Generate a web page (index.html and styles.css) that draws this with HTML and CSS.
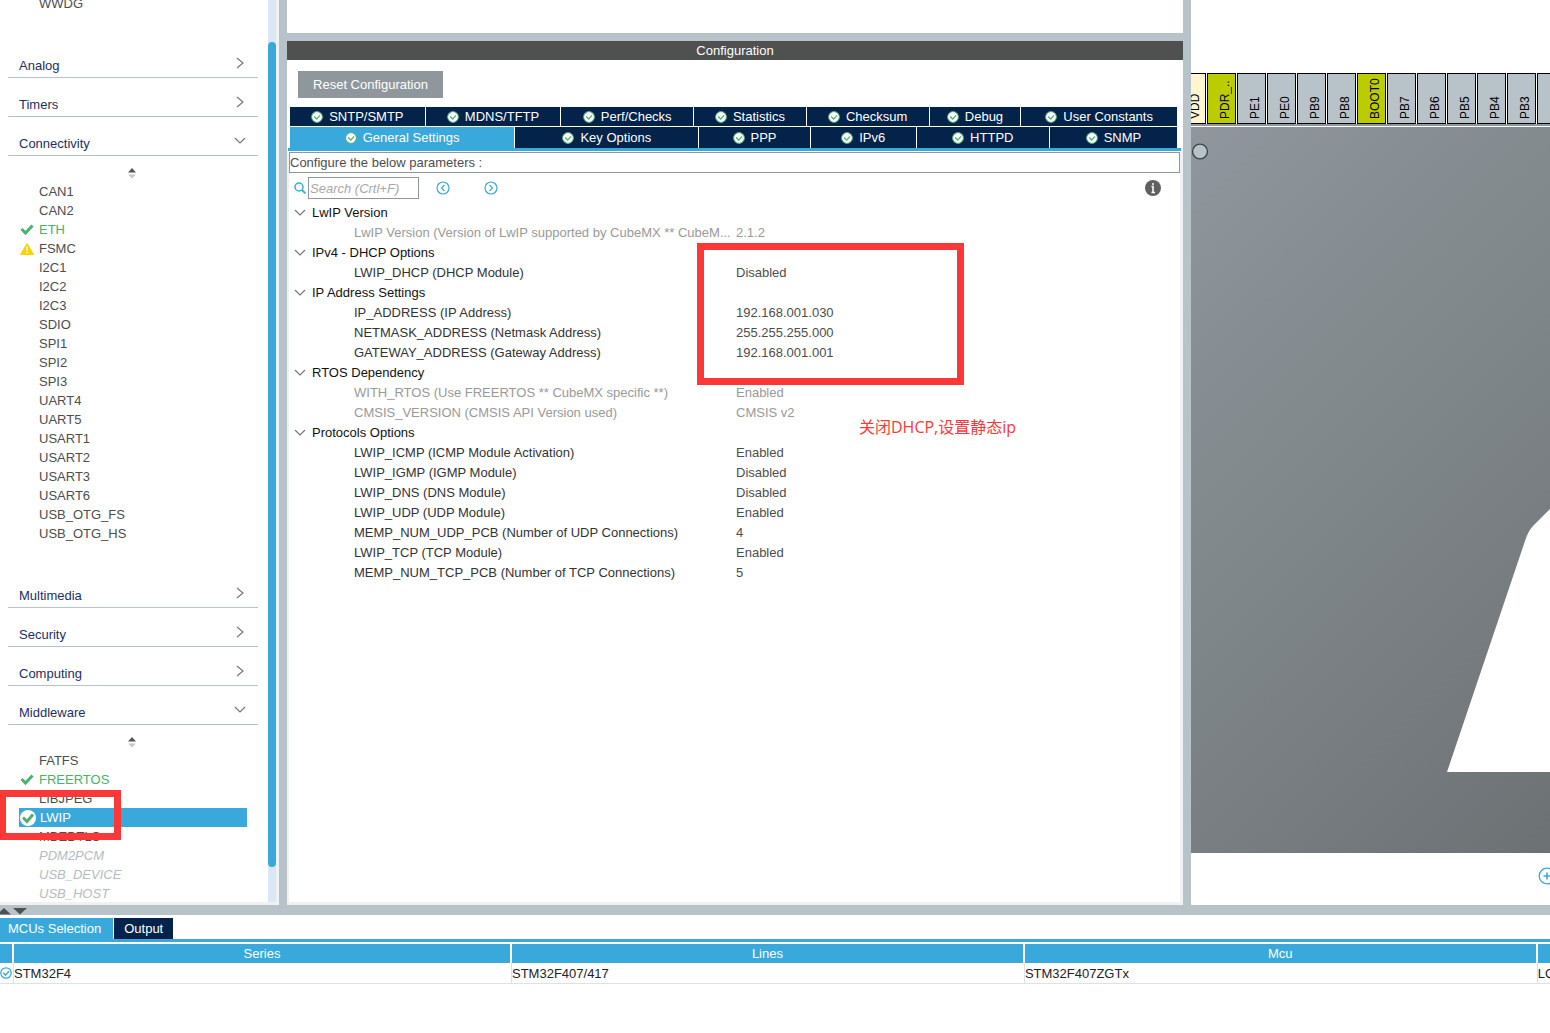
FILE: index.html
```html
<!DOCTYPE html>
<html lang="en">
<head>
<meta charset="utf-8">
<title>STM32CubeMX - LWIP Configuration</title>
<meta name="viewport" content="width=device-width, initial-scale=1">
<link rel="stylesheet" href="styles.css">
</head>
<body>
<svg width="0" height="0" class="defs" aria-hidden="true">
  <symbol id="right" viewBox="0 0 12 12"><path d="M3 1l6 5-6 5" fill="none" stroke="#777" stroke-width="1.2"/></symbol>
  <symbol id="down" viewBox="0 0 12 12"><path d="M1 3l5 5 5-5" fill="none" stroke="#777" stroke-width="1.2"/></symbol>
  <symbol id="sort" viewBox="0 0 10 12"><path d="M1 5.500L5 1l4 4.500z" fill="#555"/><path d="M1 7.500h8L5 11.500z" fill="#c8c8c8"/></symbol>
  <symbol id="tick" viewBox="0 0 14 12"><path d="M1.500 5l4 4L12.500 1.500" fill="none" stroke="#4cb06f" stroke-width="3"/></symbol>
  <symbol id="warn" viewBox="0 0 14 12"><path d="M7 .5L13.500 11.500H.5z" fill="#ffd200" stroke="#ffd200" stroke-linejoin="round"/><path d="M7 3.500v4.500M7 9v1.500" stroke="#fff" stroke-width="1.300"/></symbol>
  <symbol id="badge" viewBox="0 0 12 12"><circle cx="6" cy="6" r="5.400" fill="#fff" stroke="#4cb06f" stroke-width="1"/><path d="M3.200 5.500l2.500 2.600 3.300-3.700" fill="none" stroke="#4cb06f" stroke-width="1.300"/></symbol>
</svg>

<main class="workspace">
  <aside class="sidebar">
    <nav class="categories">
      <ul class="items items-top"><li class="item"><a href="#">WWDG</a></li></ul>
      <button class="category">Analog<svg class="chevron"><use href="#right"/></svg></button>
      <button class="category">Timers<svg class="chevron"><use href="#right"/></svg></button>
      <button class="category">Connectivity<svg class="chevron"><use href="#down"/></svg></button>
      <div class="sort"><svg class="sort-icon"><use href="#sort"/></svg></div>
      <ul class="items">
        <li class="item"><a href="#">CAN1</a></li>
        <li class="item"><a href="#">CAN2</a></li>
        <li class="item enabled"><svg class="state"><use href="#tick"/></svg><a href="#">ETH</a></li>
        <li class="item"><svg class="state"><use href="#warn"/></svg><a href="#">FSMC</a></li>
        <li class="item"><a href="#">I2C1</a></li>
        <li class="item"><a href="#">I2C2</a></li>
        <li class="item"><a href="#">I2C3</a></li>
        <li class="item"><a href="#">SDIO</a></li>
        <li class="item"><a href="#">SPI1</a></li>
        <li class="item"><a href="#">SPI2</a></li>
        <li class="item"><a href="#">SPI3</a></li>
        <li class="item"><a href="#">UART4</a></li>
        <li class="item"><a href="#">UART5</a></li>
        <li class="item"><a href="#">USART1</a></li>
        <li class="item"><a href="#">USART2</a></li>
        <li class="item"><a href="#">USART3</a></li>
        <li class="item"><a href="#">USART6</a></li>
        <li class="item"><a href="#">USB_OTG_FS</a></li>
        <li class="item"><a href="#">USB_OTG_HS</a></li>
      </ul>
      <button class="category">Multimedia<svg class="chevron"><use href="#right"/></svg></button>
      <button class="category">Security<svg class="chevron"><use href="#right"/></svg></button>
      <button class="category">Computing<svg class="chevron"><use href="#right"/></svg></button>
      <button class="category">Middleware<svg class="chevron"><use href="#down"/></svg></button>
      <div class="sort"><svg class="sort-icon"><use href="#sort"/></svg></div>
      <ul class="items">
        <li class="item"><a href="#">FATFS</a></li>
        <li class="item enabled"><svg class="state"><use href="#tick"/></svg><a href="#">FREERTOS</a></li>
        <li class="item"><a href="#">LIBJPEG</a></li>
        <li class="item selected"><svg class="state-round" viewBox="0 0 16 16"><circle cx="8" cy="8" r="8" fill="#fff"/><path d="M3 7.500l4 4 6-7" fill="none" stroke="#4cb06f" stroke-width="3"/></svg><a href="#">LWIP</a><span class="mark mark-item"></span></li>
        <li class="item"><a href="#">MBEDTLS</a></li>
        <li class="item unavailable"><a href="#">PDM2PCM</a></li>
        <li class="item unavailable"><a href="#">USB_DEVICE</a></li>
        <li class="item unavailable"><a href="#">USB_HOST</a></li>
      </ul>
    </nav>
    <div class="scrollbar"><div class="thumb"></div></div>
  </aside>

  <section class="center">
    <div class="mode"></div>
    <h1 class="title">Configuration</h1>
    <div class="config">
      <button class="reset">Reset Configuration</button>
      <div class="tabs">
        <div class="tab-row">
          <button class="tab w135"><svg class="badge"><use href="#badge"/></svg>SNTP/SMTP</button>
          <button class="tab w135"><svg class="badge"><use href="#badge"/></svg>MDNS/TFTP</button>
          <button class="tab w132"><svg class="badge"><use href="#badge"/></svg>Perf/Checks</button>
          <button class="tab w112"><svg class="badge"><use href="#badge"/></svg>Statistics</button>
          <button class="tab w122"><svg class="badge"><use href="#badge"/></svg>Checksum</button>
          <button class="tab w91"><svg class="badge"><use href="#badge"/></svg>Debug</button>
          <button class="tab w156"><svg class="badge"><use href="#badge"/></svg>User Constants</button>
        </div>
        <div class="tab-row tall">
          <button class="tab w224 active"><svg class="badge"><use href="#badge"/></svg>General Settings</button>
          <button class="tab w183"><svg class="badge"><use href="#badge"/></svg>Key Options</button>
          <button class="tab w110"><svg class="badge"><use href="#badge"/></svg>PPP</button>
          <button class="tab w105"><svg class="badge"><use href="#badge"/></svg>IPv6</button>
          <button class="tab w132"><svg class="badge"><use href="#badge"/></svg>HTTPD</button>
          <button class="tab w127"><svg class="badge"><use href="#badge"/></svg>SNMP</button>
        </div>
      </div>
      <div class="pane">
        <p class="hint">Configure the below parameters :</p>
        <div class="search">
          <label for="search"><svg class="lens" viewBox="0 0 12 12"><circle cx="5" cy="5" r="4" fill="none" stroke="#39a9dc" stroke-width="1.500"/><path d="M8 8l3.500 3.500" stroke="#39a9dc" stroke-width="1.800"/></svg></label>
          <input id="search" class="search-box" type="text" placeholder="Search (Crtl+F)" aria-label="Search">
          <button class="step" aria-label="Previous"><svg class="step-icon" viewBox="0 0 14 14"><circle cx="7" cy="7" r="6" fill="none" stroke="#39a9dc" stroke-width="1.200"/><path d="M8.500 4L5.500 7l3 3" fill="none" stroke="#39a9dc" stroke-width="1.200"/></svg></button>
          <button class="step" aria-label="Next"><svg class="step-icon" viewBox="0 0 14 14"><circle cx="7" cy="7" r="6" fill="none" stroke="#39a9dc" stroke-width="1.200"/><path d="M5.500 4l3 3-3 3" fill="none" stroke="#39a9dc" stroke-width="1.200"/></svg></button>
          <button class="info" aria-label="Information"><svg class="info-icon" viewBox="0 0 16 16"><circle cx="8" cy="8" r="8" fill="#606060"/><path d="M8 3v2M6.500 6.500H8V12M6.500 12.500h3.500" fill="none" stroke="#fff" stroke-width="1.500"/></svg></button>
        </div>
        <div class="params-wrap">
        <table class="params">
          <colgroup><col class="name-col"><col></colgroup>
          <tbody>
          <tr><th colspan="2"><svg class="fold"><use href="#down"/></svg>LwIP Version</th></tr>
          <tr class="dim"><td>LwIP Version (Version of LwIP supported by CubeMX ** CubeM...</td><td>2.1.2</td></tr>
          <tr><th colspan="2"><svg class="fold"><use href="#down"/></svg>IPv4 - DHCP Options</th></tr>
          <tr><td>LWIP_DHCP (DHCP Module)</td><td>Disabled</td></tr>
          <tr><th colspan="2"><svg class="fold"><use href="#down"/></svg>IP Address Settings</th></tr>
          <tr><td>IP_ADDRESS (IP Address)</td><td>192.168.001.030</td></tr>
          <tr><td>NETMASK_ADDRESS (Netmask Address)</td><td>255.255.255.000</td></tr>
          <tr><td>GATEWAY_ADDRESS (Gateway Address)</td><td>192.168.001.001</td></tr>
          <tr><th colspan="2"><svg class="fold"><use href="#down"/></svg>RTOS Dependency</th></tr>
          <tr class="dim"><td>WITH_RTOS (Use FREERTOS ** CubeMX specific **)</td><td>Enabled</td></tr>
          <tr class="dim"><td>CMSIS_VERSION (CMSIS API Version used)</td><td>CMSIS v2</td></tr>
          <tr><th colspan="2"><svg class="fold"><use href="#down"/></svg>Protocols Options</th></tr>
          <tr><td>LWIP_ICMP (ICMP Module Activation)</td><td>Enabled</td></tr>
          <tr><td>LWIP_IGMP (IGMP Module)</td><td>Disabled</td></tr>
          <tr><td>LWIP_DNS (DNS Module)</td><td>Disabled</td></tr>
          <tr><td>LWIP_UDP (UDP Module)</td><td>Enabled</td></tr>
          <tr><td>MEMP_NUM_UDP_PCB (Number of UDP Connections)</td><td>4</td></tr>
          <tr><td>LWIP_TCP (TCP Module)</td><td>Enabled</td></tr>
          <tr><td>MEMP_NUM_TCP_PCB (Number of TCP Connections)</td><td>5</td></tr>
          </tbody>
        </table>
        <span class="mark mark-values"></span>
        <p class="note" lang="zh-CN">关闭DHCP,设置静态ip</p>
        </div>
      </div>
    </div>
  </section>

  <section class="pinout">
    <div class="pins">
      <div class="pin power"><span>VDD</span></div>
      <div class="pin boot"><span>PDR_..</span></div>
      <div class="pin"><span>PE1</span></div>
      <div class="pin"><span>PE0</span></div>
      <div class="pin"><span>PB9</span></div>
      <div class="pin"><span>PB8</span></div>
      <div class="pin boot"><span>BOOT0</span></div>
      <div class="pin"><span>PB7</span></div>
      <div class="pin"><span>PB6</span></div>
      <div class="pin"><span>PB5</span></div>
      <div class="pin"><span>PB4</span></div>
      <div class="pin"><span>PB3</span></div>
      <div class="pin"></div>
    </div>
    <div class="chip">
      <svg class="chip-art" aria-hidden="true">
        <circle cx="9" cy="24.500" r="7.400" fill="#b8c3c9" stroke="#3c4144" stroke-width="1.300"/>
        <path d="M256 645L335 411Q338 403 342 399L359 382L420 340H900V645z" fill="#fff"/>
      </svg>
    </div>
    <div class="zoom-bar">
      <button class="zoom" aria-label="Zoom in"><svg class="zoom-icon" viewBox="0 0 18 18"><circle cx="9" cy="9" r="7.800" fill="none" stroke="#39a9dc" stroke-width="1.300"/><path d="M5.500 9h7M9 5.500v7" stroke="#39a9dc" stroke-width="1.600"/></svg></button>
    </div>
  </section>
</main>

<div class="divider">
  <svg class="arrows" viewBox="0 0 28 10"><path d="M-3 9.500L4 3l7 6.500z" fill="#4f5150"/><path d="M13 3h14l-7 6.500z" fill="#4f5150"/></svg>
</div>

<footer class="bottom">
  <div class="bottom-tabs">
    <button class="bottom-tab active">MCUs Selection</button>
    <button class="bottom-tab">Output</button>
  </div>
  <div class="table-wrap">
    <table class="mcus">
      <colgroup><col class="c-state"><col class="c-series"><col><col><col></colgroup>
      <thead><tr><th></th><th>Series</th><th>Lines</th><th>Mcu</th><th></th></tr></thead>
      <tbody><tr>
        <td><svg class="row-state" viewBox="0 0 12 12"><circle cx="6" cy="6" r="5.200" fill="none" stroke="#39a9dc" stroke-width="1.300"/><path d="M3.200 5.800l2.300 2.500 3.500-4" fill="none" stroke="#39a9dc" stroke-width="1.300"/></svg></td>
        <td>STM32F4</td><td>STM32F407/417</td><td>STM32F407ZGTx</td><td>LQFP144</td>
      </tr></tbody>
    </table>
  </div>
</footer>
</body>
</html>
```
FILE: styles.css
```css
* { box-sizing: border-box; }

body {
  margin: 0;
  height: 100vh;
  display: flex;
  flex-direction: column;
  overflow: hidden;
  background: #fff;
  color: #4d4d4d;
  font: 13px/19px "Liberation Sans", Arial, sans-serif;
}

button {
  border: 0;
  padding: 0;
  background: none;
  color: inherit;
  font: inherit;
}

svg { display: block; flex: none; }
.defs { position: absolute; }
a { color: inherit; text-decoration: none; }

.workspace {
  flex: 1;
  min-height: 0;
  display: grid;
  grid-template-columns: 279px minmax(0, 896fr) minmax(0, 359fr);
  gap: 8px;
  background: #b8c3c9;
}

/* Category list */
.sidebar {
  display: flex;
  min-height: 0;
  overflow: hidden;
  background: #fff;
  border-right: 3px solid #f0f1f3;
  border-bottom: 3px solid #f0f1f3;
}

.categories { flex: 1; padding: 0 10px 0 8px; }

.category {
  display: flex;
  justify-content: space-between;
  align-items: flex-start;
  width: 100%;
  height: 39px;
  padding: 17px 12px 2px 11px;
  border-bottom: 1px solid #b8c3c9;
  color: #1d2f5f;
  text-align: left;
}

.chevron { width: 12px; height: 12px; margin-top: 1px; }
.sort { height: 26px; padding: 11px 0 0 119px; }
.sort-icon { width: 10px; height: 12px; }

.items { list-style: none; margin: 0 0 26px; padding: 0 11px; }
.items-top { margin-top: -6px; }

.item {
  position: relative;
  display: flex;
  align-items: center;
  justify-content: flex-start;
  height: 19px;
  padding-left: 20px;
}

.state { width: 14px; height: 12px; margin: 0 5px 0 -19px; }
.state-round { width: 16px; height: 16px; margin: 0 4px 0 -19px; }
.enabled { color: #4cb06f; }
.unavailable { color: #b4bcc1; font-style: italic; }
.selected { background: #39a9dc; color: #fff; }

.scrollbar { width: 8px; padding: 42px 0 35px; background: #d9e8f6; }
.thumb { height: 100%; border-radius: 4px; background: #39a9dc; }

/* Red highlight frames */
.mark { position: absolute; z-index: 2; border: 7px solid #fb3838; }
.mark-item { left: -20px; top: -18px; width: 122px; height: 50px; }
.mark-values { left: 408px; top: 40px; width: 267px; height: 142px; }
.note {
  position: absolute;
  left: 570px;
  top: 212px;
  margin: 0;
  color: #fb3838;
  font: 16px/24px "Open Sans", "Noto Sans CJK SC", sans-serif;
}

/* Configuration */
.center { display: flex; flex-direction: column; min-height: 0; }
.mode { height: 33px; margin-bottom: 8px; background: #fff; }
.title {
  margin: 0;
  background: #4f5150;
  color: #fff;
  font-size: 13px;
  font-weight: 400;
  line-height: 19px;
  text-align: center;
}
.config { flex: 1; min-height: 0; display: flex; flex-direction: column; background: #fff; }

.reset {
  align-self: flex-start;
  width: 145px;
  height: 27px;
  margin: 11px 0 9px 11px;
  background: #8f979c;
  color: #fff;
}

.tabs {
  display: flex;
  flex-direction: column;
  gap: 1px;
  margin: 0 2px 0 1px;
  padding: 0 4px 0 2px;
  border-bottom: 3px solid #39a9dc;
}
.tab-row { display: flex; gap: 1px; height: 19px; }
.tall { height: 21px; }
.tab {
  display: flex;
  align-items: center;
  justify-content: center;
  gap: 6px;
  min-width: 0;
  background: #03234b;
  color: #fff;
  white-space: nowrap;
}
.active { background: #39a9dc; }
.badge { width: 12px; height: 12px; }
.w91 { flex: 91 1 0; }
.w105 { flex: 105 1 0; }
.w110 { flex: 110 1 0; }
.w112 { flex: 112 1 0; }
.w122 { flex: 122 1 0; }
.w127 { flex: 127 1 0; }
.w132 { flex: 132 1 0; }
.w135 { flex: 135 1 0; }
.w156 { flex: 156 1 0; }
.w183 { flex: 183 1 0; }
.w224 { flex: 224 1 0; }

.pane {
  flex: 1;
  min-height: 0;
  padding: 1px 0 0;
  border: solid #f0f1f3;
  border-width: 0 3px 3px 2px;
}
.hint { margin: 0; border: 1px solid #8f979c; }

.search { display: flex; align-items: center; height: 30px; padding: 0 19px 0 5px; }
.lens { width: 12px; height: 12px; margin-right: 2px; }
.search-box {
  width: 111px;
  height: 22px;
  margin-right: 17px;
  padding: 0 1px;
  border: 1px solid #8f979c;
  outline: 0;
  font: italic 13px/20px "Liberation Sans", Arial, sans-serif;
}
.search-box::placeholder { color: #a8a8a8; opacity: 1; }
.step { margin-right: 34px; }
.step-icon { width: 14px; height: 14px; }
.info { margin-left: auto; }
.info-icon { width: 16px; height: 16px; }

.params-wrap { position: relative; }
.params { width: 100%; border-collapse: collapse; table-layout: fixed; }
.name-col { width: 447px; }
.params tr { height: 20px; }
.params th, .params td { padding: 0; font-weight: 400; text-align: left; line-height: 20px; white-space: nowrap; }
.params th { color: #111; padding-left: 23px; }
.params td:first-child { padding-left: 65px; color: #333; }
.params .dim td { color: #999; }
.fold { float: left; width: 12px; height: 12px; margin: 4px 0 0 -18px; }

/* Pinout view */
.pinout { display: flex; flex-direction: column; min-height: 0; overflow: hidden; background: #fff; }
.pins { display: flex; gap: 1px; height: 51px; margin: 73px 0 0 -14px; }
.pin {
  flex: none;
  display: flex;
  align-items: center;
  justify-content: flex-end;
  width: 29px;
  padding: 4px 2px;
  border: 1px solid #000;
  background: #b8c3c9;
  color: #000;
  font-size: 12px;
  line-height: 16px;
}
.pin span { writing-mode: vertical-rl; transform: rotate(180deg); height: 100%; }
.power { background: #fff5cf; }
.boot { background: #bbcc00; }

.chip {
  flex: 1;
  min-height: 0;
  border-top: 2px solid #8f979c;
  background: linear-gradient(135deg, #8f969d, #7f8689 48%, #6c7174);
  background-clip: padding-box;
}
.chip-art { width: 100%; height: 100%; border-top: 1px solid #fff; }
.zoom-bar { height: 52px; padding: 14px 0 0 347px; }
.zoom { display: block; }
.zoom-icon { width: 18px; height: 18px; }

/* Lower panel */
.divider { height: 10px; background: #b8c3c9; }
.arrows { width: 28px; height: 10px; }
.bottom { height: 118px; padding-top: 3px; background: #fff; }
.bottom-tabs { display: flex; gap: 1px; border-bottom: 3px solid #39a9dc; }
.bottom-tab { height: 21px; padding: 0 10px; background: #03234b; color: #fff; }
.bottom-tab.active { padding: 0 12px 0 8px; background: #39a9dc; }

.table-wrap { overflow: hidden; padding-top: 2px; }
.mcus { width: 132.3%; table-layout: fixed; border-collapse: separate; border-spacing: 0; }
.c-state { width: 14px; }
.c-series { width: 498px; }
.mcus th { height: 19px; padding: 0; border-right: 2px solid #fff; background: #39a9dc; color: #fff; font-weight: 400; }
.mcus td { height: 21px; padding: 0; border-bottom: 1px solid #dfe2e4; color: #222; box-shadow: inset -1px 0 #dfe2e4; }
.row-state { width: 12px; height: 12px; }
```
